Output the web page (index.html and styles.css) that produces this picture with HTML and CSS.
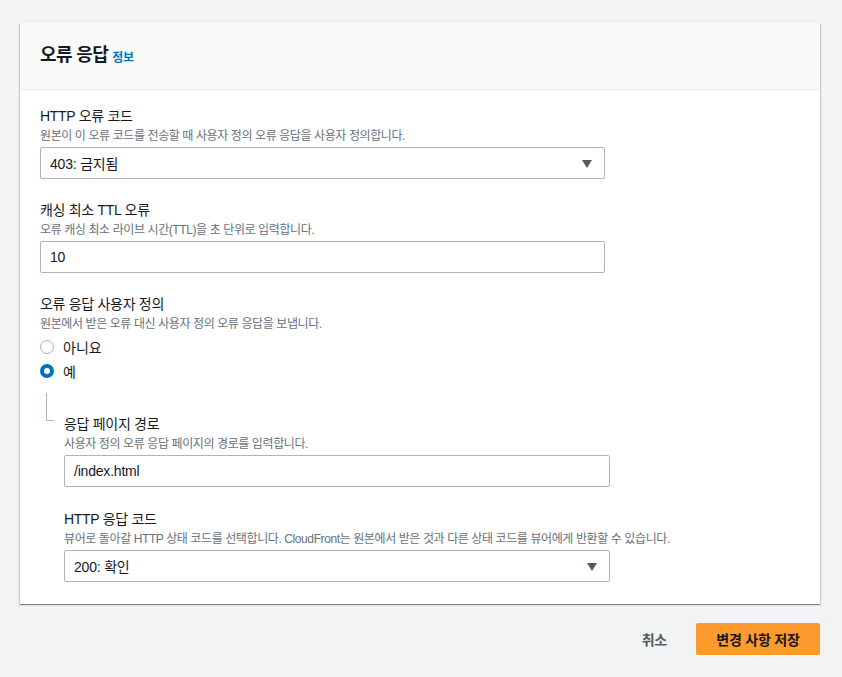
FILE: index.html
```html
<!DOCTYPE html>
<html lang="ko">
<head>
<meta charset="utf-8">
<link rel="stylesheet" href="styles.css">
</head>
<body>
<div class="page">
  <section class="card">
    <header class="card-header">
      <h2 class="title">오류 응답</h2>
      <a class="info">정보</a>
    </header>
    <div class="card-body">
      <div class="field">
        <div class="label">HTTP 오류 코드</div>
        <div class="desc">원본이 이 오류 코드를 전송할 때 사용자 정의 오류 응답을 사용자 정의합니다.</div>
        <div class="control select w-main">
          <span>403: 금지됨</span>
          <span class="caret"></span>
        </div>
      </div>
      <div class="field">
        <div class="label">캐싱 최소 TTL 오류</div>
        <div class="desc">오류 캐싱 최소 라이브 시간(TTL)을 초 단위로 입력합니다.</div>
        <div class="control w-main"><span>10</span></div>
      </div>
      <div class="field">
        <div class="label">오류 응답 사용자 정의</div>
        <div class="desc">원본에서 받은 오류 대신 사용자 정의 오류 응답을 보냅니다.</div>
        <div class="radios">
          <div class="radio-row"><span class="radio"></span><span>아니요</span></div>
          <div class="radio-row"><span class="radio checked"></span><span>예</span></div>
        </div>
        <div class="nested">
          <div class="connector-col"><div class="connector"></div></div>
          <div class="nested-body">
            <div class="field">
              <div class="label">응답 페이지 경로</div>
              <div class="desc">사용자 정의 오류 응답 페이지의 경로를 입력합니다.</div>
              <div class="control w-nested"><span>/index.html</span></div>
            </div>
            <div class="field">
              <div class="label">HTTP 응답 코드</div>
              <div class="desc">뷰어로 돌아갈 HTTP 상태 코드를 선택합니다. CloudFront는 원본에서 받은 것과 다른 상태 코드를 뷰어에게 반환할 수 있습니다.</div>
              <div class="control select w-nested">
                <span>200: 확인</span>
                <span class="caret"></span>
              </div>
            </div>
          </div>
        </div>
      </div>
    </div>
  </section>
  <div class="actions">
    <a class="cancel">취소</a>
    <button class="primary">변경 사항 저장</button>
  </div>
</div>
</body>
</html>
```

FILE: styles.css
```css
* { box-sizing: border-box; }
html, body {
  margin: 0;
  padding: 0;
  background: #f2f3f3;
  font-family: "Liberation Sans", "Noto Sans CJK KR", sans-serif;
  color: #16191f;
}
.page {
  padding: 23px 22px 0 20px;
  width: 842px;
}
.card {
  background: #fff;
  box-shadow: 0 1px 1px 0 rgba(0,28,36,.3), 1px 1px 1px 0 rgba(0,28,36,.15), -1px 1px 1px 0 rgba(0,28,36,.15);
}
.card-header {
  height: 67px;
  background: #fafafa;
  border-bottom: 1px solid #eaeded;
  display: flex;
  align-items: center;
  padding: 0 20px 2px;
}
.title {
  margin: 0;
  font-size: 18px;
  font-weight: 700;
  line-height: 24px;
  letter-spacing: -0.6px;
}
.info {
  margin-left: 4px;
  margin-top: 2px;
  font-size: 12px;
  font-weight: 700;
  color: #0073bb;
  letter-spacing: -0.4px;
}
.card-body {
  padding: 16px 20px 22px;
}
.field + .field { margin-top: 21px; }
.nested-body .field + .field { margin-top: 22px; }
.label {
  font-size: 14px;
  line-height: 20px;
  letter-spacing: -0.3px;
}
.desc {
  font-size: 12px;
  line-height: 20px;
  color: #687078;
  letter-spacing: -0.4px;
}
.control {
  margin-top: 1px;
  height: 32px;
  border: 1px solid #aab7b8;
  border-radius: 2px;
  display: flex;
  align-items: center;
  padding: 0 9px;
  font-size: 14px;
  letter-spacing: -0.2px;
}
.w-main { width: 565px; }
.w-nested { width: 546px; }
.select { justify-content: space-between; }
.caret {
  width: 0;
  height: 0;
  border-left: 5px solid transparent;
  border-right: 5px solid transparent;
  border-top: 8px solid #545b64;
  margin-right: 3px;
  margin-top: 1px;
}
.radios { margin-top: 1px; }
.radio-row {
  display: flex;
  align-items: center;
  height: 24px;
  font-size: 14px;
}
.radio {
  width: 14px;
  height: 14px;
  border-radius: 50%;
  border: 1px solid #aab7b8;
  margin-right: 9px;
  background: #fff;
}
.radio.checked {
  border: 4px solid #0073bb;
}
.nested {
  display: flex;
  margin-top: 10px;
}
.connector-col {
  width: 24px;
  flex: none;
}
.connector {
  margin-left: 6px;
  width: 8px;
  height: 28px;
  border-left: 1px solid #aab7b8;
  border-bottom: 1px solid #aab7b8;
}
.nested-body {
  padding-top: 21px;
}
.actions {
  display: flex;
  justify-content: flex-end;
  align-items: center;
  margin-top: 19px;
}
.cancel {
  font-size: 14px;
  font-weight: 700;
  color: #545b64;
  margin-right: 29px;
  letter-spacing: -0.2px;
}
.primary {
  width: 124px;
  height: 32px;
  border: none;
  border-radius: 2px;
  background: #fd9a2e;
  color: #16191f;
  font-family: inherit;
  font-size: 14px;
  font-weight: 700;
  padding: 0;
  letter-spacing: -0.2px;
}
```
